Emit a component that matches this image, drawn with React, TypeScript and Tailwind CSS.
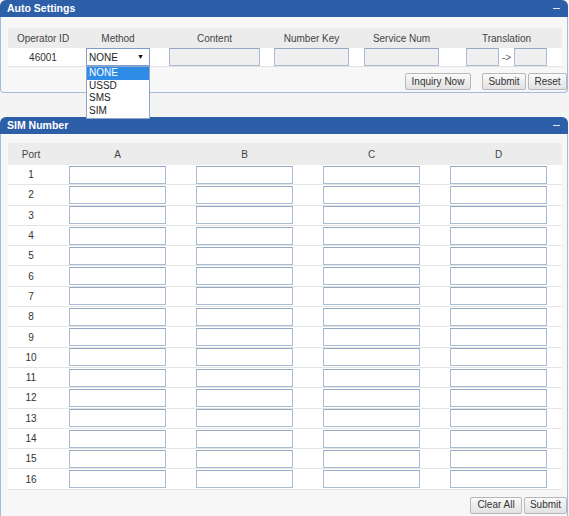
import React from "react";

const inputCls =
  "h-[18px] border border-[#a9bcd6] border-t-[#95a9c6] bg-white";
const disInputCls =
  "h-[18px] border border-[#a9bcd6] border-t-[#95a9c6] bg-[#efefef]";
const btnCls =
  "h-[17px] px-0 whitespace-nowrap border border-[#b8b8b8] rounded-[2px] bg-gradient-to-b from-[#fafafa] to-[#e2e2e2] text-[10px] text-[#333] leading-none flex items-center";

function PanelHeader({ title }: { title: string }) {
  return (
    <div className="h-[17px] bg-[#2d5ea8] rounded-t-[6px] flex items-center justify-between pl-[7px] pr-[8px]">
      <span className="text-white font-bold text-[10.5px] leading-none">{title}</span>
      <span className="w-[7px] h-[1.5px] bg-[#dfe8f5]" />
    </div>
  );
}

export default function App() {
  const rows = Array.from({ length: 16 }, (_, i) => i + 1);
  return (
    <div className="relative w-[569px] h-[516px] bg-[#f4f4f4] font-['Liberation_Sans',Arial,sans-serif] text-[10px] text-[#333] overflow-hidden">
      {/* Auto Settings panel */}
      <div className="w-[568px]">
        <PanelHeader title="Auto Settings" />
        <div className="border-x border-b border-[#a3bbdc] rounded-b-[4px] bg-[#f7f7f7] pt-[11px] pb-[2px]">
          <div className="ml-[7px] mr-[5px]">
            <div className="grid grid-cols-[70px_80px_113px_81px_99px_111px] h-[20px] bg-[#ececec] items-center text-center text-[#444]">
              <div>Operator ID</div>
              <div>Method</div>
              <div>Content</div>
              <div>Number Key</div>
              <div>Service Num</div>
              <div>Translation</div>
            </div>
            <div className="grid grid-cols-[70px_80px_113px_81px_99px_111px] h-[19px] bg-white border-b border-[#e2e2e2] items-center">
              <div className="text-center">46001</div>
              <div className="flex justify-center">
                <div className="w-[64px] h-[18px] border border-[#7f9ccb] bg-white flex items-center justify-between pl-[2px] pr-[5px] text-[10px] text-[#222]">
                  <span>NONE</span>
                  <span className="text-[7px] text-black">▼</span>
                </div>
              </div>
              <div className="flex justify-center">
                <div className={`${disInputCls} w-[91px]`} />
              </div>
              <div className="flex justify-center">
                <div className={`${disInputCls} w-[75px]`} />
              </div>
              <div className="flex justify-center">
                <div className={`${disInputCls} w-[75px]`} />
              </div>
              <div className="flex justify-center items-center">
                <div className={`${disInputCls} w-[33px]`} />
                <span className="w-[15px] text-center text-[#666]">-&gt;</span>
                <div className={`${disInputCls} w-[33px]`} />
              </div>
            </div>
          </div>
          <div className="flex justify-end mt-[6px]">
            <button className={`${btnCls} w-[66px] justify-center`}>Inquiry Now</button>
            <button className={`${btnCls} w-[44px] justify-center ml-[11px]`}>Submit</button>
            <button className={`${btnCls} w-[39px] justify-center ml-[2px]`}>Reset</button>
          </div>
        </div>
      </div>

      {/* SIM Number panel */}
      <div className="w-[568px] mt-[24px]">
        <PanelHeader title="SIM Number" />
        <div className="border-x border-b border-[#a3bbdc] bg-[#f7f7f7] pt-[9px] pb-[2px]">
          <div className="ml-[7px] mr-[5px]">
            <div className="grid grid-cols-[46px_127px_127px_127px_127px] h-[22px] bg-[#ececec] items-center text-center text-[#444]">
              <div>Port</div>
              <div>A</div>
              <div>B</div>
              <div>C</div>
              <div>D</div>
            </div>
            {rows.map((r) => (
              <div
                key={r}
                className="grid grid-cols-[46px_127px_127px_127px_127px] h-[20.3px] bg-white border-b border-[#e4e4e4] items-center"
              >
                <div className="text-center text-[#333]">{r}</div>
                <div className="flex justify-center">
                  <div className={`${inputCls} w-[97px]`} />
                </div>
                <div className="flex justify-center">
                  <div className={`${inputCls} w-[97px]`} />
                </div>
                <div className="flex justify-center">
                  <div className={`${inputCls} w-[97px]`} />
                </div>
                <div className="flex justify-center">
                  <div className={`${inputCls} w-[97px]`} />
                </div>
              </div>
            ))}
          </div>
          <div className="flex justify-end mt-[7px]">
            <button className={`${btnCls} w-[52px] justify-center`}>Clear All</button>
            <button className={`${btnCls} w-[43px] justify-center ml-[2px]`}>Submit</button>
          </div>
        </div>
      </div>

      {/* Open dropdown list */}
      <div className="absolute left-[86px] top-[66px] w-[64px] border border-[#8ea6c9] bg-white text-[10px] text-[#222] leading-none pb-[1px]">
        <div className="h-[12.5px] bg-[#2f8ce6] text-white flex items-center pl-[2px]">NONE</div>
        <div className="h-[12.5px] flex items-center pl-[2px]">USSD</div>
        <div className="h-[12.5px] flex items-center pl-[2px]">SMS</div>
        <div className="h-[12.5px] flex items-center pl-[2px]">SIM</div>
      </div>
    </div>
  );
}
